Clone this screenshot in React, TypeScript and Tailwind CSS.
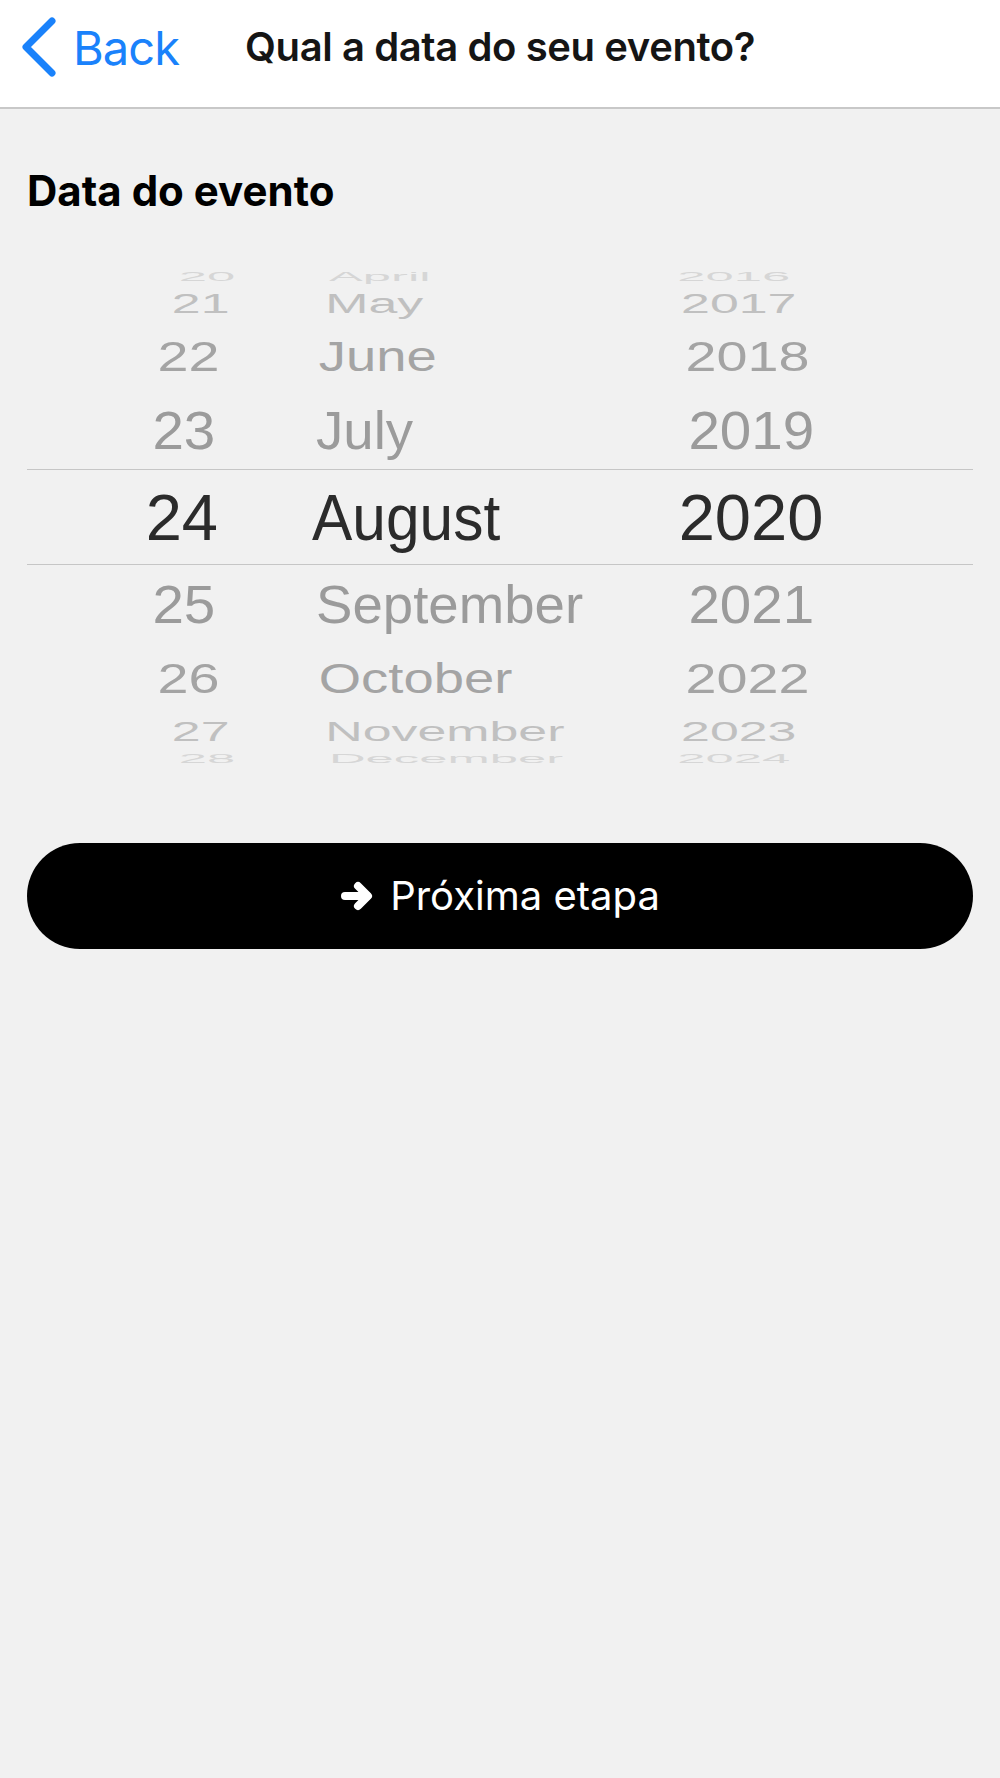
import React from "react";

type Row = {
  h: string;
  row: string;
  sy: string;
  dig: string;
  mon: string;
  color: string;
  day: string;
  month: string;
  year: string;
  center?: boolean;
};

const rows: Row[] = [
  { h: "h-[18px]", row: "scale-x-[0.93]", sy: "scale-y-[0.2]", dig: "scale-x-[0.84]", mon: "scale-x-[0.84]", color: "text-[#d6d6d6]", day: "20", month: "April", year: "2016" },
  { h: "h-[36px]", row: "scale-x-[0.95]", sy: "scale-y-[0.43]", dig: "scale-x-[0.84]", mon: "scale-x-[0.84]", color: "text-[#c0c0c0]", day: "21", month: "May", year: "2017" },
  { h: "h-[70px]", row: "scale-x-[0.985]", sy: "scale-y-[0.65]", dig: "scale-x-[0.87]", mon: "scale-x-[0.85]", color: "text-[#a4a4a4]", day: "22", month: "June", year: "2018" },
  { h: "h-[78px]", row: "scale-x-[1]", sy: "scale-y-[0.82]", dig: "scale-x-[0.87]", mon: "scale-x-[0.84]", color: "text-[#9b9b9b]", day: "23", month: "July", year: "2019" },
  { h: "h-[96px]", row: "scale-x-[1]", sy: "scale-y-[1]", dig: "scale-x-[1]", mon: "scale-x-[0.93]", color: "text-[#2b2b2b]", day: "24", month: "August", year: "2020", center: true },
  { h: "h-[78px]", row: "scale-x-[1]", sy: "scale-y-[0.82]", dig: "scale-x-[0.87]", mon: "scale-x-[0.84]", color: "text-[#9b9b9b]", day: "25", month: "September", year: "2021" },
  { h: "h-[70px]", row: "scale-x-[0.985]", sy: "scale-y-[0.65]", dig: "scale-x-[0.87]", mon: "scale-x-[0.85]", color: "text-[#a4a4a4]", day: "26", month: "October", year: "2022" },
  { h: "h-[36px]", row: "scale-x-[0.95]", sy: "scale-y-[0.43]", dig: "scale-x-[0.84]", mon: "scale-x-[0.84]", color: "text-[#c0c0c0]", day: "27", month: "November", year: "2023" },
  { h: "h-[18px]", row: "scale-x-[0.93]", sy: "scale-y-[0.2]", dig: "scale-x-[0.84]", mon: "scale-x-[0.84]", color: "text-[#d6d6d6]", day: "28", month: "December", year: "2024" },
];

export default function App() {
  return (
    <div className="min-h-[1778px] w-full bg-[#f1f1f1]" style={{ fontFamily: "Inter, 'Noto Sans', sans-serif" }}>
      <header className="flex h-[109px] items-center border-b-2 border-[#c8c8c8] bg-white">
        <div className="flex items-center pl-[21px] pb-[13px] text-[#1a82fb]">
          <svg width="36" height="60" viewBox="0 0 36 60" fill="none">
            <path d="M31 4 L5 30 L31 56" stroke="#1a82fb" strokeWidth="7" strokeLinecap="round" strokeLinejoin="round" />
          </svg>
          <span className="ml-[16px] text-[47px] leading-none tracking-[-0.02em]">Back</span>
        </div>
        <h1 className="ml-[66px] pb-[13px] text-[40px] font-semibold leading-none tracking-[-0.01em] text-[#151515]">
          Qual a data do seu evento?
        </h1>
      </header>

      <main className="px-[27px]">
        <h2 className="mt-[57px] text-[42px] font-bold leading-[50px] tracking-[0em] text-black">Data do evento</h2>

        <div
          className="mt-[51px] flex h-[500px] flex-col overflow-hidden"
          style={{ fontFamily: "'Liberation Sans', Arial, sans-serif" }}
        >
          {rows.map((r) => (
            <div
              key={r.day}
              className={`flex shrink-0 items-center ${r.h} ${r.row} ${r.color} ${
                r.center ? "border-y-[1.5px] border-[#c6c6c6]" : ""
              }`}
            >
              <div className={`flex w-[191px] justify-end ${r.center ? "" : "pr-[3px]"}`}>
                <span className={`block origin-right text-[65px] leading-none ${r.sy} ${r.dig}`}>{r.day}</span>
              </div>
              <div className={`ml-[94px] flex w-[287px] justify-start ${r.center ? "" : "pl-[4px]"}`}>
                <span className={`block origin-left text-[65px] leading-none ${r.sy} ${r.mon}`}>{r.month}</span>
              </div>
              <div className="flex w-[304px] justify-center">
                <span className={`block text-[65px] leading-none ${r.sy} ${r.dig}`}>{r.year}</span>
              </div>
            </div>
          ))}
        </div>

        <button className="mt-[76px] flex h-[106px] w-full items-center justify-center gap-[16px] rounded-full bg-black text-white">
          <svg width="34" height="32" viewBox="0 0 34 32" fill="none">
            <path d="M5 16 H27" stroke="white" strokeWidth="8" strokeLinecap="round" />
            <path d="M18 6 L28 16 L18 26" stroke="white" strokeWidth="8" strokeLinecap="round" strokeLinejoin="round" />
          </svg>
          <span className="text-[40px] leading-none">Próxima etapa</span>
        </button>
      </main>
    </div>
  );
}
